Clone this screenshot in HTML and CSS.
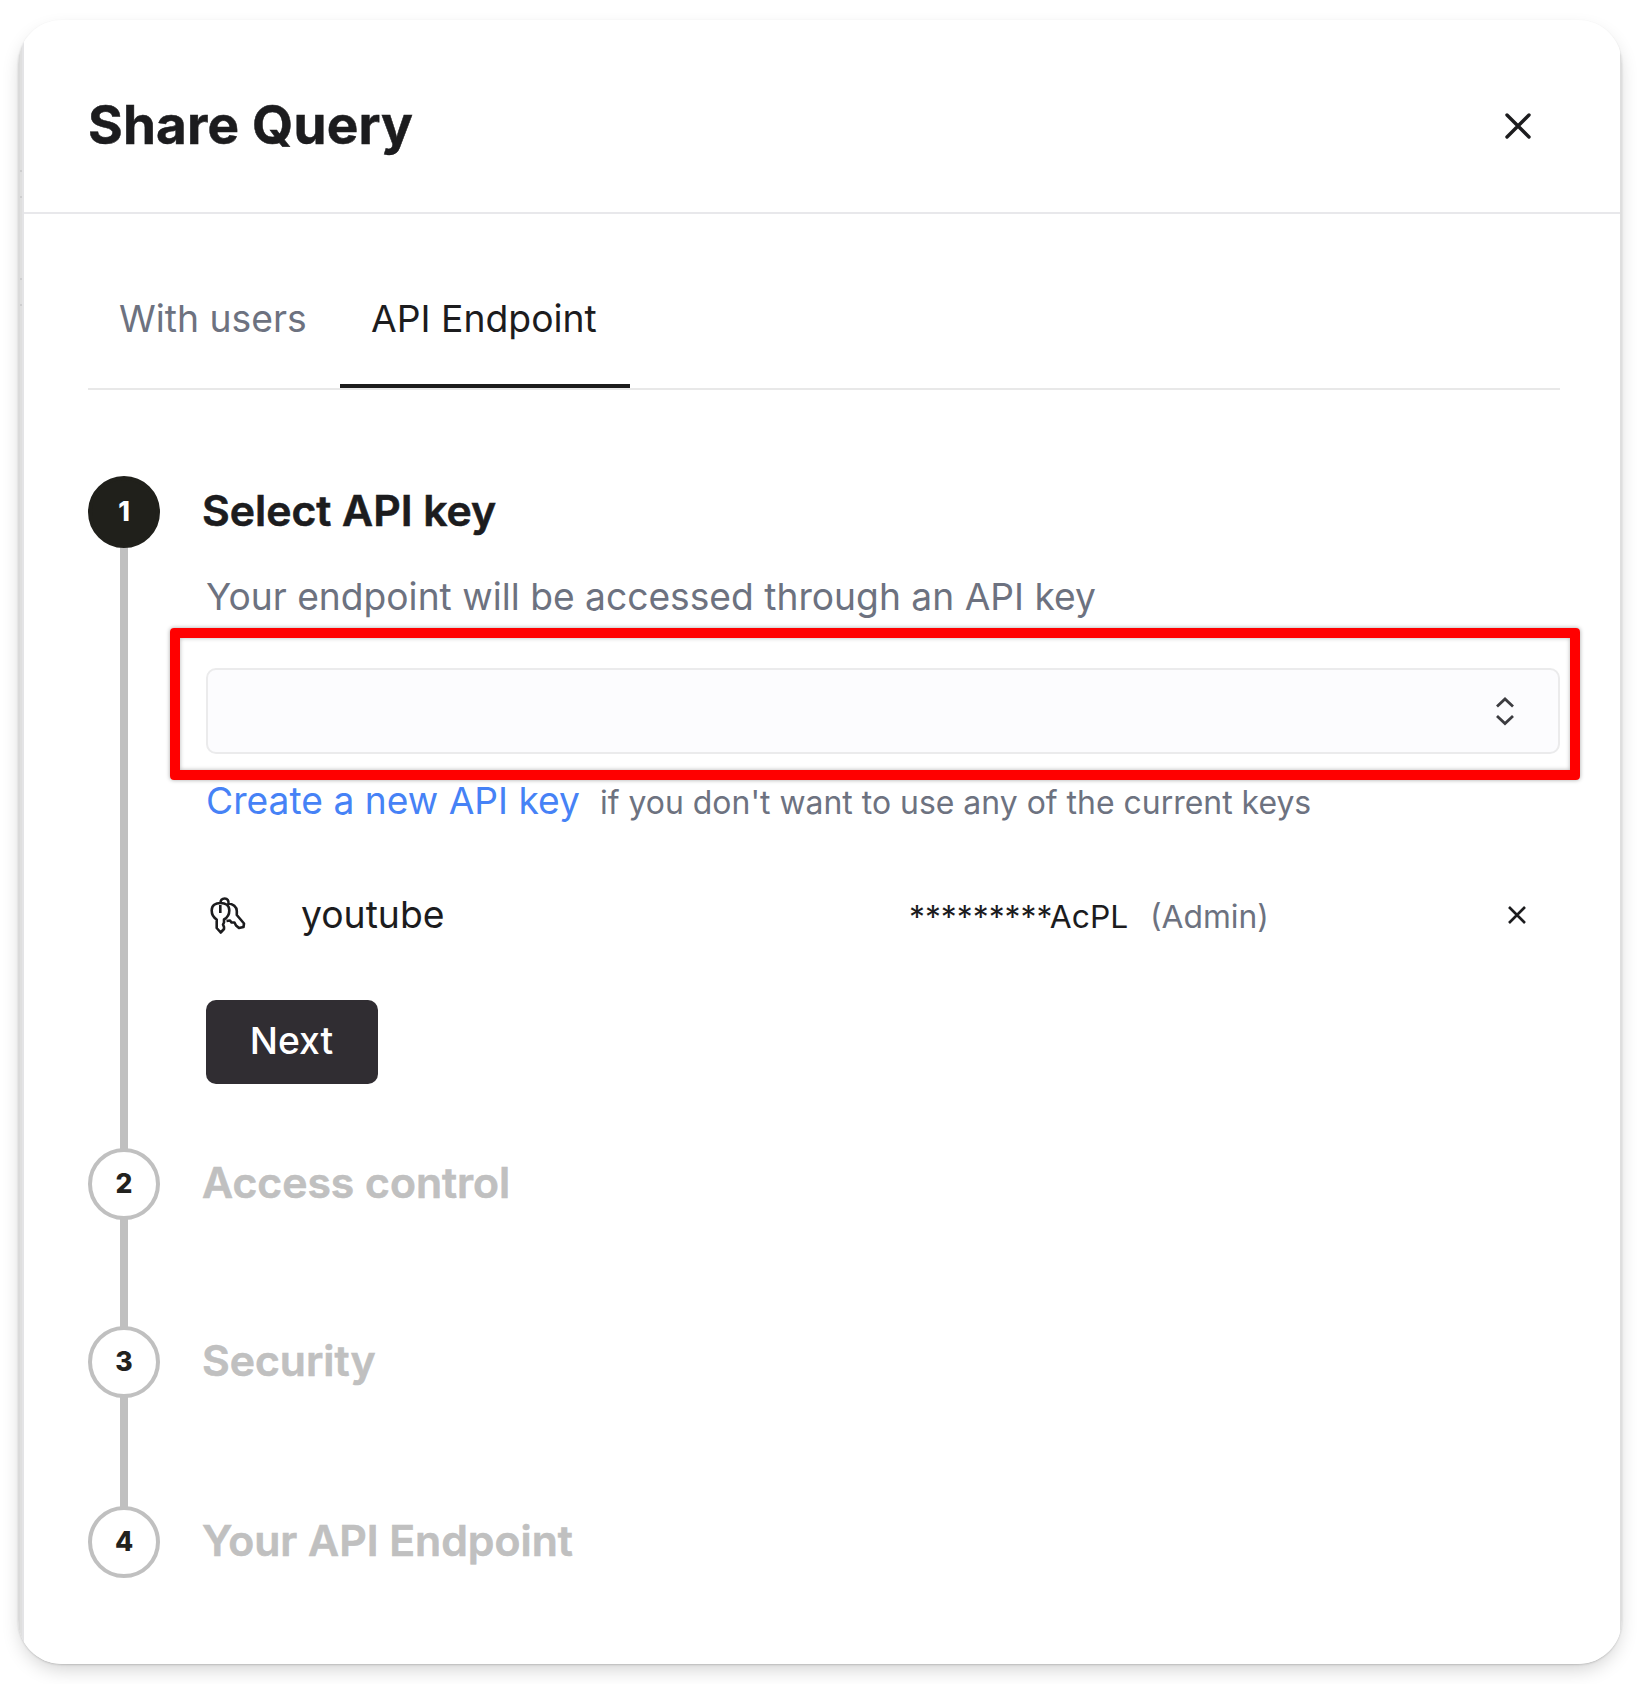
FILE: index.html
```html
<!DOCTYPE html>
<html lang="en">
<head>
<meta charset="utf-8">
<title>Share Query</title>
<link rel="stylesheet" href="styles.css">
</head>
<body>
<main class="dialog">
  <header class="dialog-header">
    <h1 class="title">Share Query</h1>
    <svg class="close" width="28" height="28" viewBox="0 0 28 28"><path d="M3 3l22 22M25 3L3 25"/></svg>
  </header>
  <nav class="tabs">
    <a class="tab users">With users</a>
    <a class="tab active">API Endpoint</a>
  </nav>
  <ol class="steps">
    <li class="step current">
      <div class="rail"><span class="marker">1</span></div>
      <div class="content">
        <h2 class="heading">Select API key</h2>
        <div class="panel">
          <p class="desc">Your endpoint will be accessed through an API key</p>
          <div class="select">
            <svg width="20" height="30" viewBox="0 0 20 30"><path d="M2 10.500l8-7.500l8 7.500M2 20l8 7.500l8-7.500"/></svg>
            <span class="highlight"></span>
          </div>
          <p class="help"><a class="link">Create a new API key</a><span class="hint">if you don't want to use any of the current keys</span></p>
          <div class="key-row">
            <svg class="keys" width="36" height="38" viewBox="0 0 36 38"><path d="M6.700 31V22.500C3.500 20.500 1.700 17 1.700 13.500C1.700 8.500 5.500 6 10.500 6S19.300 8.500 19.300 13.500C19.300 17 17.500 20.500 14 22.500V25.500L13 27.500L14 30V32L10.700 35.500ZM10.300 8V16M10.500 6C10.500 3 12 1.500 14.700 1.500S19 3.500 18.500 7M18 6.500C23 6.500 26.800 10 26.800 14V18L34 26.500L33.500 30L29 31L26 28.500L24.500 25.500L21.500 25.500L20 23.500L16.500 24"/></svg>
            <span class="key-name">youtube</span>
            <span class="key-mask">*********AcPL</span>
            <span class="key-role">(Admin)</span>
            <svg class="remove" width="20" height="20" viewBox="0 0 20 20"><path d="M2 2l16 16M18 2L2 18"/></svg>
          </div>
          <button class="next">Next</button>
        </div>
      </div>
    </li>
    <li class="step access">
      <div class="rail"><span class="marker">2</span></div>
      <div class="content"><h2 class="heading">Access control</h2></div>
    </li>
    <li class="step security">
      <div class="rail"><span class="marker">3</span></div>
      <div class="content"><h2 class="heading">Security</h2></div>
    </li>
    <li class="step endpoint">
      <div class="rail"><span class="marker">4</span></div>
      <div class="content"><h2 class="heading">Your API Endpoint</h2></div>
    </li>
  </ol>
</main>
</body>
</html>
```
FILE: styles.css
```css
* { box-sizing: border-box; margin: 0; padding: 0; }
body {
  height: 1684px;
  padding: 20px 18px;
  overflow: hidden;
  background: #fff;
  font-family: Inter, "Liberation Sans", sans-serif;
  color: #1c1c1e;
  white-space: nowrap;
}
svg { fill: none; stroke: #1c1c1e; flex: none; display: block; }

.dialog {
  width: 1604px;
  height: 1644px;
  padding: 0 2px 0 6px;
  border-radius: 44px;
  background:
    linear-gradient(#cdcdce, #cdcdce) 2px 150px / 2px 2px no-repeat,
    linear-gradient(#cdcdce, #cdcdce) 2px 176px / 2px 2px no-repeat,
    linear-gradient(#cdcdce, #cdcdce) 2px 258px / 2px 2px no-repeat,
    linear-gradient(#cdcdce, #cdcdce) 2px 284px / 2px 2px no-repeat,
    linear-gradient(90deg, #dadada 2px, #dfdfdf 2px 4px, #e4e4e6 4px 6px, #fff 6px 1602px, #dedede 1602px);
  box-shadow: 0 1px 2px rgba(0, 0, 0, .16), 0 8px 20px -4px rgba(0, 0, 0, .2);
}

.dialog-header {
  height: 194px;
  padding: 19px 88px 0 64px;
  border-bottom: 2px solid #e8e8eb;
  display: flex;
  align-items: center;
  justify-content: space-between;
}
.title { margin-bottom: 2px; font-size: 53px; line-height: 64px; font-weight: 700; letter-spacing: .2px; -webkit-text-stroke: .5px; }
.close { stroke-width: 3.4; stroke-linecap: round; }

.tabs {
  display: flex;
  height: 176px;
  margin: 0 60px 0 64px;
  padding-top: 40px;
  border-bottom: 2px solid #e8e8e8;
}
.tab { padding: 40px 0 0 31px; width: 290px; font-size: 37.3px; line-height: 50px; color: #6d7280; }
.users { width: 252px; }
.active { color: #1c1c1e; border-bottom: 4px solid #1b1b1b; }

.steps { list-style: none; margin: 86px 60px 0 64px; }
.step { display: flex; gap: 42px; color: #c0c0c0; }
.current { height: 672px; color: #1c1c1e; }
.access { height: 178px; }
.security { height: 180px; }
.endpoint { height: 72px; }
.rail { width: 72px; display: flex; flex-direction: column; align-items: center; flex: none; }
.rail::after { content: ""; flex: 1; width: 8px; margin: -2px 0; background: #c0c0c0; }
.endpoint .rail::after { display: none; }
.marker {
  width: 72px;
  height: 72px;
  padding-bottom: 3px;
  border: 4px solid #c0c0c0;
  border-radius: 50%;
  display: flex;
  align-items: center;
  justify-content: center;
  flex: none;
  color: #22221e;
  font-size: 26.5px;
  font-weight: 800;
  z-index: 1;
}
.current .marker { background: #20201b; border-color: #20201b; color: #fff; }
.content { flex: 1; }
.heading { font-size: 42.7px; line-height: 69px; font-weight: 600; -webkit-text-stroke: .6px; }

.panel { margin-left: 4px; }
.desc { margin-top: 27px; font-size: 37.2px; line-height: 50px; color: #6d7280; }
.select {
  position: relative;
  height: 86px;
  margin-top: 46px;
  padding-right: 43px;
  border: 2px solid #ebebec;
  border-radius: 10px;
  background: #fcfcfe;
  display: flex;
  align-items: center;
  justify-content: flex-end;
}
.select svg { stroke: #3c3c40; stroke-width: 2.8; }
.highlight {
  position: absolute;
  inset: -42px -22px -28px -38px;
  border: 10px solid #f00;
  border-radius: 4px;
  box-shadow: 0 0 4px rgba(0, 0, 0, .35), inset 0 0 4px rgba(0, 0, 0, .3);
}
.help { display: flex; align-items: baseline; gap: 20px; height: 50px; margin-top: 22px; line-height: 50px; color: #6d7280; }
.link { font-size: 37.2px; color: #4682f6; }
.hint { font-size: 31.95px; }
.key-row { display: flex; align-items: center; height: 50px; margin-top: 63px; line-height: 50px; }
.keys { margin: 4px 0 0 4px; stroke-width: 2.6; stroke-linejoin: round; }
.key-name { width: 608px; margin-left: 55px; padding-top: 2px; font-size: 37.3px; }
.key-mask { width: 241px; font-size: 31.8px; padding-top: 5px; }
.key-role { font-size: 31.8px; color: #6d7280; padding-top: 5px; }
.remove { margin: 2px 33px 0 auto; stroke-width: 2.6; }
.next {
  display: flex;
  align-items: center;
  justify-content: center;
  width: 172px;
  height: 84px;
  margin-top: 61px;
  padding: 0 1px 2px 0;
  border: 0;
  border-radius: 10px;
  background: #302d32;
  color: #fff;
  font: 500 37.3px/50px Inter, "Liberation Sans", sans-serif;
}
```
